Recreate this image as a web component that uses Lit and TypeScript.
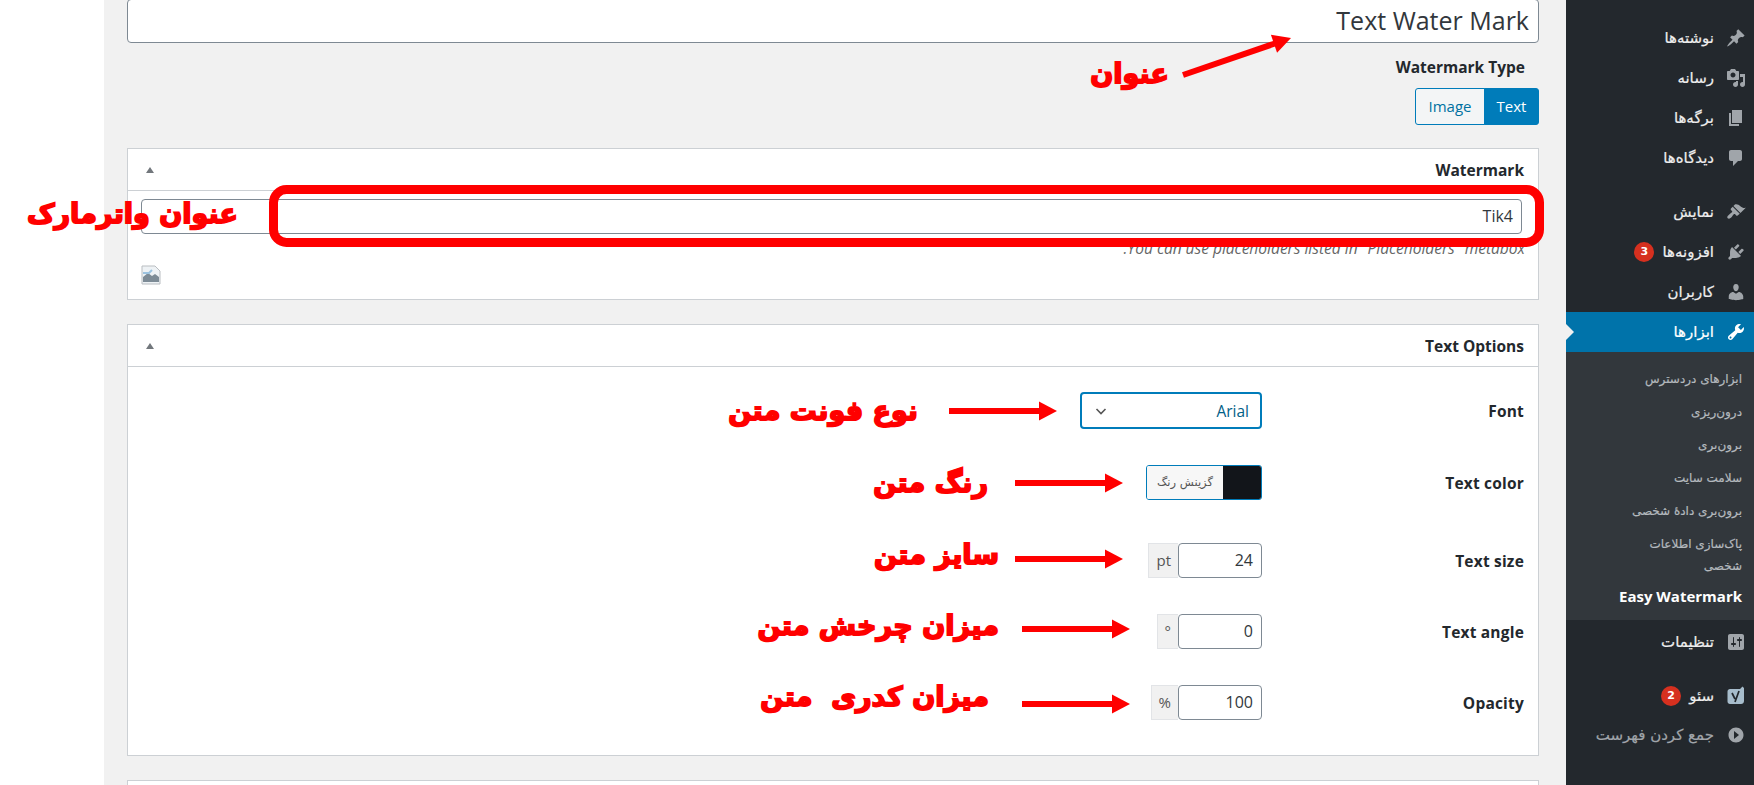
import { LitElement, html, css, svg } from "lit";
import { customElement } from "lit/decorators.js";

const ICONS: Record<string, string> = {
  post: "M10.44 3.02l1.82-1.82 6.36 6.35-1.83 1.82c-1.05-.68-2.48-.57-3.41.36l-.75.75c-.92.93-1.04 2.35-.35 3.41l-1.83 1.82-2.41-2.41-2.8 2.79c-.42.42-3.38 2.71-3.8 2.29s1.86-3.39 2.28-3.81l2.79-2.79L4.1 9.36l1.83-1.82c1.05.69 2.48.57 3.4-.36l.75-.75c.93-.92 1.05-2.35.36-3.41z",
  media: "M13 11V4c0-.55-.45-1-1-1h-1.67L9 1H5L3.67 3H2c-.55 0-1 .45-1 1v7c0 .55.45 1 1 1h10c.55 0 1-.45 1-1zM7 4.5c1.38 0 2.5 1.12 2.5 2.5S8.38 9.5 7 9.5 4.5 8.38 4.5 7 5.62 4.5 7 4.5zM14 6h5v10.5c0 1.38-1.12 2.5-2.5 2.5S14 17.88 14 16.5s1.12-2.5 2.5-2.5c.17 0 .34.02.5.05V9h-3V6zm-4 8.05V13h2v3.5c0 1.38-1.12 2.5-2.5 2.5S7 17.88 7 16.5 8.12 14 9.5 14c.17 0 .34.02.5.05z",
  page: "M6 15V2h10v13H6zm-1 1h8v2H3V5h2v11z",
  comment: "M5 2h9c1.1 0 2 .9 2 2v7c0 1.1-.9 2-2 2h-2l-5 5v-5H5c-1.1 0-2-.9-2-2V4c0-1.1.9-2 2-2z",
  brush: "M14.48 11.06L7.41 3.99l1.5-1.5c.5-.56 2.3-.47 3.51.32 1.21.8 1.43 1.28 2.91 2.1 1.18.64 2.45 1.26 4.45.85zm-.71.71L6.7 4.7 4.93 6.47c-.39.39-.39 1.02 0 1.41l1.06 1.06c.39.39.39 1.03 0 1.42-.6.6-1.43 1.11-2.21 1.69-.35.26-.7.53-1.01.84C1.43 13.71.96 15.12 1.5 15.9c.5.76 2.11 1.3 3.73-.36.3-.3.57-.65.83-1 .59-.78 1.1-1.6 1.69-2.2.39-.39 1.02-.39 1.41 0l1.06 1.06c.39.39 1.02.39 1.41 0z",
  plugin: "M13.11 4.36L9.87 7.6 8 5.73l3.24-3.24c.35-.34 1.05-.2 1.56.32.52.51.66 1.21.31 1.55zm-8 1.77l.91-1.12 9.01 9.01-1.19.84c-.71.71-2.63 1.16-3.82 1.16H6.14L4.9 17.26c-.59.59-1.54.59-2.12 0-.59-.58-.59-1.53 0-2.12l1.24-1.24v-3.88c0-1.13.4-3.19 1.09-3.89zm7.26 3.97l3.24-3.24c.34-.35 1.04-.21 1.55.31.52.51.66 1.21.31 1.55l-3.24 3.25z",
  user: "M10 9.25c-2.27 0-2.73-3.44-2.73-3.44C7 4.02 7.82 2 9.97 2c2.16 0 2.98 2.02 2.71 3.81 0 0-.41 3.44-2.68 3.44zm0 2.57L12.72 10c2.39 0 4.52 2.33 4.52 4.53v2.49s-3.65 1.13-7.24 1.13c-3.65 0-7.24-1.13-7.24-1.13v-2.49c0-2.25 1.94-4.48 4.47-4.48z",
  tools: "M16.68 9.77c-1.34 1.34-3.3 1.67-4.95.99l-5.41 6.52c-.99.99-2.59.99-3.58 0s-.99-2.59 0-3.57l6.52-5.42c-.68-1.65-.35-3.61.99-4.95 1.28-1.28 3.12-1.62 4.72-1.06l-2.89 2.89 2.82 2.82 2.86-2.87c.53 1.58.18 3.39-1.08 4.65zM3.81 16.21c.4.39 1.04.39 1.43 0 .4-.4.4-1.04 0-1.43-.39-.4-1.03-.4-1.43 0-.39.39-.39 1.03 0 1.43z",
  settings: "M18 16V4c0-1.1-.9-2-2-2H4c-1.1 0-2 .9-2 2v12c0 1.1.9 2 2 2h12c1.1 0 2-.9 2-2zM8 11h1c.55 0 1 .45 1 1s-.45 1-1 1H8v1.5c0 .28-.22.5-.5.5s-.5-.22-.5-.5V13H6c-.55 0-1-.45-1-1s.45-1 1-1h1V5.5c0-.28.22-.5.5-.5s.5.22.5.5V11zm5-2h-1c-.55 0-1-.45-1-1s.45-1 1-1h1V5.5c0-.28.22-.5.5-.5s.5.22.5.5V7h1c.55 0 1 .45 1 1s-.45 1-1 1h-1v5.5c0 .28-.22.5-.5.5s-.5-.22-.5-.5V9z",
  collapse: "M10 2.5c4.14 0 7.5 3.36 7.5 7.5s-3.36 7.5-7.5 7.5-7.5-3.36-7.5-7.5 3.36-7.5 7.5-7.5zM8 14l5-4-5-4z",
};

const YOAST = svg`<path fill="#a7bdcc" d="M4 3h10l2.500-2.500L18 2v13c0 1.700-1.300 3-3 3H4c-1.400 0-2.500-1.100-2.500-2.500v-10C1.500 4.100 2.600 3 4 3z"/><path fill="none" stroke="#23282d" stroke-width="1.700" d="M6 7l3 6M13 5l-4 11"/>`;

const Icon = (name: string) => html`<svg class="ico" viewBox="0 0 20 20" aria-hidden="true">${
  name === "yoast" ? YOAST : svg`<path d=${ICONS[name]}></path>`
}</svg>`;

interface Item { label: string; icon: string; badge?: string; cls?: string }

const TOP: Item[] = [
  { label: "نوشته‌ها", icon: "post" },
  { label: "رسانه", icon: "media" },
  { label: "برگه‌ها", icon: "page" },
  { label: "دیدگاه‌ها", icon: "comment", cls: "last" },
  { label: "نمایش", icon: "brush" },
  { label: "افزونه‌ها", icon: "plugin", badge: "3" },
  { label: "کاربران", icon: "user" },
];
const SUB = ["ابزارهای دردسترس", "درون‌ریزی", "برون‌بری", "سلامت سایت", "برون‌بری دادهٔ شخصی", "پاک‌سازی اطلاعات شخصی"];
const BOTTOM: Item[] = [
  { label: "تنظیمات", icon: "settings", cls: "last" },
  { label: "سئو", icon: "yoast", badge: "2" },
  { label: "جمع کردن فهرست", icon: "collapse", cls: "dim" },
];

const ARROWS = [
  [949, 411, 1057, 411],
  [1015, 483, 1123, 483],
  [1015, 559, 1123, 559],
  [1022, 629, 1130, 629],
  [1022, 704, 1130, 704],
];

/* Annotation labels: right edge and vertical centre of each note on the screenshot. */
const NOTES: [string, number, number][] = [
  ["عنوان", 1169, 74],
  ["عنوان واترمارک", 238, 214],
  ["نوع فونت متن", 918, 411],
  ["رنگ متن", 988, 483],
  ["سایز متن", 999, 555],
  ["میزان چرخش متن", 999, 626],
  ["میزان کدری  متن", 989, 697],
];

@customElement("app-root")
export class AppRoot extends LitElement {
  static styles = css`
    :host { display: block; }
    * { box-sizing: border-box; }
    .page {
      position: relative; display: flex; width: 1754px; height: 785px; overflow: hidden;
      font-family: "Open Sans", "DejaVu Sans", sans-serif; color: #23282d; background: #fff;
    }
    .gutter { width: 104px; flex: none; background: #fff; }
    .main {
      width: 1462px; flex: none; background: #f1f1f1; padding: 0 27px 0 23px;
      display: flex; flex-direction: column;
    }
    .title {
      height: 44px; margin-top: -1px; flex: none; background: #fff; border: 1px solid #7e8993;
      border-radius: 4px; text-align: right; padding: 0 9px; font-size: 25px; line-height: 40px; color: #32373c;
    }
    .wm-type { font-size: 15.500px; font-weight: 700; text-align: right; padding-right: 14px; margin-top: 14px; line-height: 20px; }
    .toggle { display: flex; justify-content: flex-end; margin-top: 11px; height: 37px; flex: none; }
    .tbtn { font-size: 15px; line-height: 35px; border: 1px solid #007cba; text-align: center; }
    .tbtn.image { width: 70px; color: #0071a1; background: #f3f5f6; border-radius: 3px 0 0 3px; }
    .tbtn.text { width: 55px; color: #fff; background: #007cba; border-radius: 0 3px 3px 0; margin-left: -1px; }
    .card { background: #fff; border: 1px solid #ccd0d4; flex: none; }
    .head {
      height: 42px; border-bottom: 1px solid #ccd0d4; display: flex; justify-content: space-between;
      align-items: center; padding: 0 14px 0 18px; font-size: 15.500px; font-weight: 700;
    }
    .tri { width: 0; height: 0; border: 4px solid transparent; border-top: 0; border-bottom: 6px solid #72777c; }
    .wm { margin-top: 23px; height: 152px; }
    .wm-body { padding: 8px 16px 0 13px; }
    .field {
      background: #fff; border: 1px solid #7e8993; border-radius: 4px; height: 35px; line-height: 33px;
      text-align: right; padding: 0 8px; font-size: 16px; color: #32373c;
    }
    .hint { direction: rtl; font-size: 15.500px; font-style: italic; color: #666; line-height: 16px; margin-top: 6px; margin-right: -3px; white-space: nowrap; }
    .broken { display: block; margin-top: 9px; width: 20px; height: 20px; }
    .opts { margin-top: 24px; height: 432px; }
    .opts-body { display: flex; flex-direction: column; gap: 36px; padding-top: 25px; }
    .row { display: flex; justify-content: flex-end; align-items: center; padding-right: 14px; }
    .row.wide { margin-top: 7px; }
    .label { width: 262px; flex: none; text-align: right; font-size: 15.500px; font-weight: 700; letter-spacing: .2px; }
    .select {
      width: 182px; height: 37px; border: 2px solid #007cba; border-radius: 4px; display: flex;
      justify-content: space-between; align-items: center; padding: 0 11px 0 12px; font-size: 15.500px; color: #016087;
    }
    .chev { width: 14px; height: 14px; fill: none; stroke: #555; stroke-width: 1.600; }
    .color { width: 116px; height: 35px; display: flex; border: 1px solid #007cba; border-radius: 3px; overflow: hidden; }
    .pick { flex: 1; background: #f7f7f7; text-align: center; font-size: 11.500px; line-height: 33px; color: #555; font-family: "DejaVu Sans", sans-serif; direction: rtl; }
    .swatch { width: 38px; background: #12151a; }
    .group { display: flex; height: 35px; }
    .addon { background: #f1f1f1; border: 1px solid #e2e4e7; border-right: 0; font-size: 15px; line-height: 33px; text-align: center; color: #555; padding: 0 7px; }
    .num { width: 84px; margin: 0; }
    .next { margin-top: 24px; height: 40px; }

    .side { width: 188px; flex: none; background: #23282d; padding-top: 18px; direction: rtl; font-family: "DejaVu Sans", sans-serif; }
    .item { display: flex; align-items: center; height: 40px; padding-right: 8px; gap: 12px; font-size: 15px; color: #eee; -webkit-text-stroke: .2px currentColor; }
    .item.last { margin-bottom: 14px; }
    .item.dim { color: #a0a5aa; margin-top: -1px; }
    .item.active { background: #0073aa; color: #fff; position: relative; }
    .item.active::after {
      content: ""; position: absolute; left: 0; top: 12px; border: 8px solid transparent;
      border-left-color: #f1f1f1; border-right: 0;
    }
    .ico { width: 20px; height: 20px; flex: none; fill: #a0a5aa; }
    .active .ico { fill: #fff; }
    .badge {
      width: 20px; height: 20px; border-radius: 50%; background: #d6301f; color: #fff; font-size: 11px; font-weight: 700;
      line-height: 20px; text-align: center; margin-right: -4px; -webkit-text-stroke: 0;
    }
    .sub { background: #32373c; padding: 10px 0 8px; margin-bottom: 2px; }
    .sub div { padding: 5.500px 12px 5.500px 44px; font-size: 12px; line-height: 22px; color: #b4b9be; -webkit-text-stroke: .2px currentColor; }
    .sub .cur { font-family: "Open Sans", sans-serif; font-weight: 700; color: #fff; font-size: 15px; direction: ltr; text-align: right; margin-top: -3px; padding-left: 0; white-space: nowrap; -webkit-text-stroke: 0; }

    .marks { position: absolute; inset: 0; width: 1754px; height: 785px; pointer-events: none; }
    .note {
      position: absolute; transform: translateY(-50%); white-space: pre; direction: rtl; color: #f00;
      font-family: "DejaVu Sans", sans-serif; font-weight: 700; font-size: 27px; line-height: 40px;
      -webkit-text-stroke: 1.800px #f00;
    }
  `;

  private menu(i: Item) {
    return html`<div class="item ${i.cls ?? ""}">${Icon(i.icon)}<span>${i.label}</span>${
      i.badge ? html`<span class="badge">${i.badge}</span>` : ""
    }</div>`;
  }

  private arrow(a: number[]) {
    const [x1, y1, x2, y2] = a;
    const ang = (Math.atan2(y2 - y1, x2 - x1) * 180) / Math.PI;
    const len = Math.hypot(x2 - x1, y2 - y1);
    return svg`<g transform="translate(${x1} ${y1}) rotate(${ang})">
      <rect x="0" y="-3" width=${len - 17} height="6" fill="#f00"></rect>
      <path d="M${len - 18} -9.500L${len} 0L${len - 18} 9.500z" fill="#f00"></path>
    </g>`;
  }

  private row(label: string, control: unknown, wide = false) {
    return html`<div class="row ${wide ? "wide" : ""}">${control}<div class="label">${label}</div></div>`;
  }

  private numeric(addon: string, value: string) {
    return html`<div class="group"><div class="addon">${addon}</div><div class="field num">${value}</div></div>`;
  }

  render() {
    return html`<div class="page">
      <div class="gutter"></div>
      <div class="main">
        <div class="title">Text Water Mark</div>
        <div class="wm-type">Watermark Type</div>
        <div class="toggle"><div class="tbtn image">Image</div><div class="tbtn text">Text</div></div>

        <section class="card wm">
          <div class="head"><span class="tri"></span><span>Watermark</span></div>
          <div class="wm-body">
            <div class="field">Tik4</div>
            <div class="hint">You can use placeholders listed in "Placeholders" metabox.</div>
            <svg class="broken" viewBox="0 0 20 20" aria-hidden="true">
              <path d="M1 1h13l5 5v13H1z" fill="#eef2f5" stroke="#b9bdc1"></path>
              <path d="M2 12l5-4 4 3 3-2 4 3v5H2z" fill="#7d8b96"></path>
              <path d="M2 8h6l3-3" fill="none" stroke="#9cc3e0" stroke-width="2"></path>
            </svg>
          </div>
        </section>

        <section class="card opts">
          <div class="head"><span class="tri"></span><span>Text Options</span></div>
          <div class="opts-body">
            ${this.row("Font", html`<div class="select">
              <svg class="chev" viewBox="0 0 14 14" aria-hidden="true"><path d="M2.500 5l4.500 4.500L11.500 5"></path></svg><span>Arial</span>
            </div>`)}
            ${this.row("Text color", html`<div class="color"><div class="pick">گزینش رنگ</div><div class="swatch"></div></div>`)}
            ${this.row("Text size", this.numeric("pt", "24"), true)}
            ${this.row("Text angle", this.numeric("°", "0"))}
            ${this.row("Opacity", this.numeric("%", "100"))}
          </div>
        </section>

        <section class="card next"></section>
      </div>

      <nav class="side">
        ${TOP.map((i) => this.menu(i))}
        ${this.menu({ label: "ابزارها", icon: "tools", cls: "active" })}
        <div class="sub">
          ${SUB.map((s) => html`<div>${s}</div>`)}
          <div class="cur">Easy Watermark</div>
        </div>
        ${BOTTOM.map((i) => this.menu(i))}
      </nav>

      <svg class="marks" viewBox="0 0 1754 785" aria-hidden="true">
        <rect x="273.500" y="189.500" width="1266" height="53" rx="13" fill="none" stroke="#f00" stroke-width="9"></rect>
        ${this.arrow([1183, 75, 1291, 38])}
        ${ARROWS.map((a) => this.arrow(a))}
      </svg>
      ${NOTES.map(([t, r, y]) => html`<div class="note" style="right:${1754 - r}px;top:${y}px">${t}</div>`)}
    </div>`;
  }
}
